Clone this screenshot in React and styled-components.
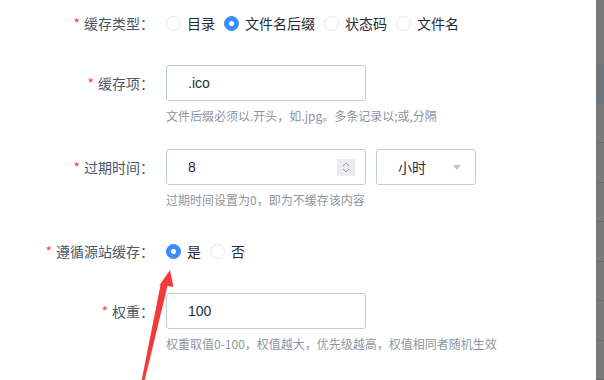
import React from "react";
import styled, { createGlobalStyle } from "styled-components";

const GlobalStyle = createGlobalStyle`
  html, body {
    margin: 0;
    padding: 0;
    background: #fff;
  }
  body {
    font-family: "Noto Sans CJK SC", "Noto Sans", sans-serif;
    -webkit-font-smoothing: antialiased;
  }
`;

const Page = styled.div`
  display: flex;
  width: 604px;
  height: 380px;
  overflow: hidden;
  position: relative;
`;

const Form = styled.div`
  flex: 1;
  padding-top: 5px;
`;

const Item = styled.div`
  display: flex;
  margin-bottom: 24px;
`;

const Label = styled.div`
  width: 154px;
  padding-right: 12px;
  height: 36px;
  line-height: 36px;
  text-align: right;
  font-size: 14px;
  color: #48576a;
  flex-shrink: 0;
`;

const Star = styled.span`
  color: #ff4949;
  margin-right: 4px;
`;

const Content = styled.div`
  display: flex;
  flex-direction: column;
`;

const Line = styled.div`
  display: flex;
  align-items: center;
  gap: 10px;
  height: 36px;
`;

const RadioGroup = styled.div`
  display: flex;
  align-items: center;
  height: 36px;
`;

const Radio = styled.label`
  display: flex;
  align-items: center;
  margin-right: ${(p) => p.$gap}px;
  font-size: 14px;
  color: #1f2d3d;
`;

const Dot = styled.span`
  box-sizing: border-box;
  width: 15px;
  height: 15px;
  border-radius: 50%;
  margin-right: 6px;
  border: 1px solid ${(p) => (p.$on ? "#3a8ef6" : "#e4e6ea")};
  background: ${(p) => (p.$on ? "#3a8ef6" : "#fff")};
  display: flex;
  align-items: center;
  justify-content: center;
  &::after {
    content: "";
    width: 5px;
    height: 5px;
    border-radius: 50%;
    background: #fff;
    display: ${(p) => (p.$on ? "block" : "none")};
  }
`;

const Input = styled.div`
  box-sizing: border-box;
  width: ${(p) => p.$w}px;
  height: 36px;
  border: 1px solid #bfcbd9;
  border-radius: 3px;
  padding-left: 21px;
  padding-right: 10px;
  display: flex;
  align-items: center;
  justify-content: space-between;
  font-size: 14px;
  color: #1f2d3d;
  font-family: "Liberation Sans", "Noto Sans CJK SC", sans-serif;
`;

const SelectText = styled.span`
  font-family: "Noto Sans CJK SC", sans-serif;
`;

const Spinner = styled.div`
  width: 18px;
  height: 17px;
  background: #ebebf0;
  display: flex;
  align-items: center;
  justify-content: center;
`;

const Caret = styled.span`
  width: 0;
  height: 0;
  border-left: 4px solid transparent;
  border-right: 4px solid transparent;
  border-top: 5px solid #c0c4cc;
  margin-right: 4px;
`;

const Help = styled.div`
  font-size: 12px;
  color: #8f959e;
  line-height: 18px;
  margin-top: 6px;
`;

const Strip = styled.div`
  width: 8px;
  flex-shrink: 0;
  background: #7a7a7a;
  display: flex;
  flex-direction: column;
`;

const StripTop = styled.div`
  height: 67px;
`;

const StripActive = styled.div`
  height: 41px;
  background: #6e767b;
`;

const StripRow = styled.div`
  height: 40px;
  border-bottom: 1px solid #6a6a6a;
`;

const Arrow = styled.svg`
  position: absolute;
  left: 0;
  top: 0;
  pointer-events: none;
`;

function Radios({ options, value, gaps }) {
  return (
    <RadioGroup>
      {options.map((o, i) => (
        <Radio key={o} $gap={gaps[i]}>
          <Dot $on={o === value} />
          {o}
        </Radio>
      ))}
    </RadioGroup>
  );
}

export default function App() {
  return (
    <Page>
      <GlobalStyle />
      <Form>
        <Item>
          <Label>
            <Star>*</Star>缓存类型：
          </Label>
          <Radios
            options={["目录", "文件名后缀", "状态码", "文件名"]}
            value="文件名后缀"
            gaps={[9, 9, 9, 0]}
          />
        </Item>
        <Item>
          <Label>
            <Star>*</Star>缓存项：
          </Label>
          <Content>
            <Input $w={200}>.ico</Input>
            <Help>文件后缀必须以.开头，如.jpg。多条记录以;或,分隔</Help>
          </Content>
        </Item>
        <Item>
          <Label>
            <Star>*</Star>过期时间：
          </Label>
          <Content>
            <Line>
              <Input $w={200}>
                8
                <Spinner>
                  <svg width="10" height="13" viewBox="0 0 10 13">
                    <path d="M2 5 L5 2 L8 5" fill="none" stroke="#9aa0a8" strokeWidth="1" />
                    <path d="M2 8 L5 11 L8 8" fill="none" stroke="#9aa0a8" strokeWidth="1" />
                  </svg>
                </Spinner>
              </Input>
              <Input $w={100}>
                <SelectText>小时</SelectText>
                <Caret />
              </Input>
            </Line>
            <Help>过期时间设置为0，即为不缓存该内容</Help>
          </Content>
        </Item>
        <Item>
          <Label>
            <Star>*</Star>遵循源站缓存：
          </Label>
          <Radios options={["是", "否"]} value="是" gaps={[9, 0]} />
        </Item>
        <Item>
          <Label>
            <Star>*</Star>权重：
          </Label>
          <Content>
            <Input $w={200}>100</Input>
            <Help>权重取值0-100，权值越大，优先级越高，权值相同者随机生效</Help>
          </Content>
        </Item>
      </Form>
      <Strip>
        <StripTop />
        <StripActive />
        {Array.from({ length: 7 }).map((_, i) => (
          <StripRow key={i} />
        ))}
      </Strip>
      <Arrow width="604" height="380" viewBox="0 0 604 380">
        <polygon
          points="170,270 173.5,287 167.5,286 144.5,381 141.5,381 160.5,285 159,286"
          fill="#f23a3a"
        />
      </Arrow>
    </Page>
  );
}
